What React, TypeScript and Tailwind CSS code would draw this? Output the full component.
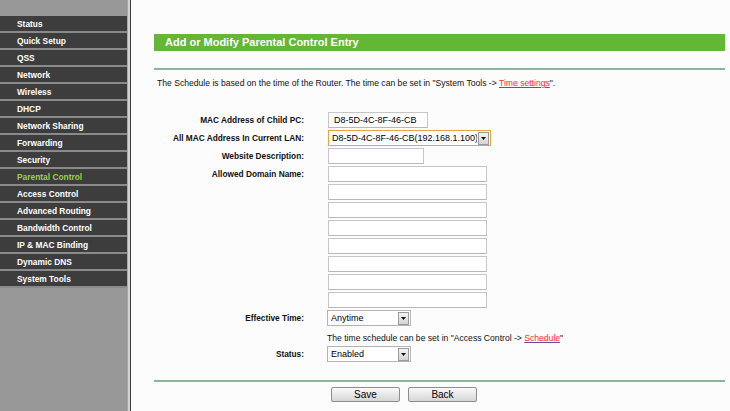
import React from "react";

const menu = [
  "Status",
  "Quick Setup",
  "QSS",
  "Network",
  "Wireless",
  "DHCP",
  "Network Sharing",
  "Forwarding",
  "Security",
  "Parental Control",
  "Access Control",
  "Advanced Routing",
  "Bandwidth Control",
  "IP & MAC Binding",
  "Dynamic DNS",
  "System Tools",
];

function Arrow() {
  return (
    <div className="flex h-[13px] w-[11px] shrink-0 items-center justify-center border border-[#9a9a9a] bg-gradient-to-b from-[#f4f4f4] to-[#d4d4d4]">
      <svg width="5" height="3" viewBox="0 0 5 3">
        <path d="M0 0h5L2.5 3z" fill="#111" />
      </svg>
    </div>
  );
}

function Select({ value, width, focus }: { value: string; width: string; focus?: boolean }) {
  return (
    <div
      className={`flex h-[16px] items-center justify-between gap-px border pl-[3px] pr-px text-[9px] text-black ${width} ${
        focus ? "border-[#e6a544] bg-white" : "border-[#b4b4b4] bg-white"
      }`}
    >
      <span className="overflow-hidden whitespace-nowrap leading-none">{value}</span>
      <Arrow />
    </div>
  );
}

function Input({ width, value }: { width: string; value?: string }) {
  return (
    <div
      className={`flex h-[16px] items-center whitespace-nowrap border border-[#c6c6c6] border-b-[#b8b8b8] bg-white pl-[5px] text-[9px] leading-none text-black ${width}`}
    >
      {value}
    </div>
  );
}

function Row({ label, children, ml = "ml-[24px]" }: { label?: string; children: React.ReactNode; ml?: string }) {
  return (
    <div className="flex h-[18px] items-center">
      <div className="w-[150px] shrink-0 text-right text-[8.3px] font-bold text-[#111]">{label}</div>
      <div className={ml}>{children}</div>
    </div>
  );
}

export default function App() {
  return (
    <div className="flex h-screen min-h-[411px] bg-[#fcfcfc] font-['Liberation_Sans',Arial,sans-serif]">
      <aside className="flex">
        <div className="w-[127px] bg-[#989898] pt-[16px]">
          {menu.map((item) => (
            <div
              key={item}
              className={`h-[17px] border-b-2 border-[#8a8a8a] bg-[#3d3d3d] pl-[17px] text-[8.4px] font-bold leading-[16px] ${
                item === "Parental Control" ? "text-[#9bd23c]" : "text-white"
              }`}
            >
              {item}
            </div>
          ))}
        </div>
        <div className="w-px bg-[#a8a8a8]" />
        <div className="w-[2px] bg-[#d2d2d2]" />
        <div className="w-px bg-[#3a3a3a]" />
      </aside>

      <main className="flex-1 pl-[23px] pr-[5px] pt-[34px] text-[#111]">
        <div className="h-[17px] bg-[#63b734] pl-[11px] text-[11px] font-bold leading-[17px] text-white">
          Add or Modify Parental Control Entry
        </div>
        <div className="mt-[17px] h-[2px] bg-[#86b69c]" />
        <p className="mt-[7px] pl-[3px] text-[8.6px] leading-[12px]">
          The Schedule is based on the time of the Router. The time can be set in "System Tools -&gt;{" "}
          <a className="text-[#ff2a2a] underline decoration-[#6e4aa0]">Time settings</a>".
        </p>

        <div className="mt-[22px]">
          <Row label="MAC Address of Child PC:">
            <Input width="w-[100px]" value="D8-5D-4C-8F-46-CB" />
          </Row>
          <Row label="All MAC Address In Current LAN:">
            <Select value="D8-5D-4C-8F-46-CB(192.168.1.100)" width="w-[163px]" focus />
          </Row>
          <Row label="Website Description:">
            <Input width="w-[96px]" />
          </Row>
          <Row label="Allowed Domain Name:">
            <Input width="w-[159px]" />
          </Row>
          {[1, 2, 3, 4, 5, 6, 7].map((n) => (
            <Row key={n}>
              <Input width="w-[159px]" />
            </Row>
          ))}
          <Row label="Effective Time:" ml="ml-[23px]">
            <Select value="Anytime" width="w-[84px]" />
          </Row>
          <Row ml="ml-[23px]">
            <span className="whitespace-nowrap text-[8.6px]">
              The time schedule can be set in "Access Control -&gt;{" "}
              <a className="text-[#ff2a2a] underline decoration-[#6e4aa0]">Schedule</a>"
            </span>
          </Row>
          <Row label="Status:" ml="ml-[23px]">
            <Select value="Enabled" width="w-[84px]" />
          </Row>
        </div>

        <div className="mt-[17px] h-[2px] bg-[#86b69c]" />
        <div className="mt-[5px] flex gap-[8px] pl-[177px]">
          {["Save", "Back"].map((b) => (
            <button
              key={b}
              className="h-[15px] w-[69px] rounded-[2px] border border-[#8e8e8e] bg-gradient-to-b from-[#fafafa] to-[#d6d6d6] text-[10px] leading-none text-black"
            >
              {b}
            </button>
          ))}
        </div>
      </main>
    </div>
  );
}
